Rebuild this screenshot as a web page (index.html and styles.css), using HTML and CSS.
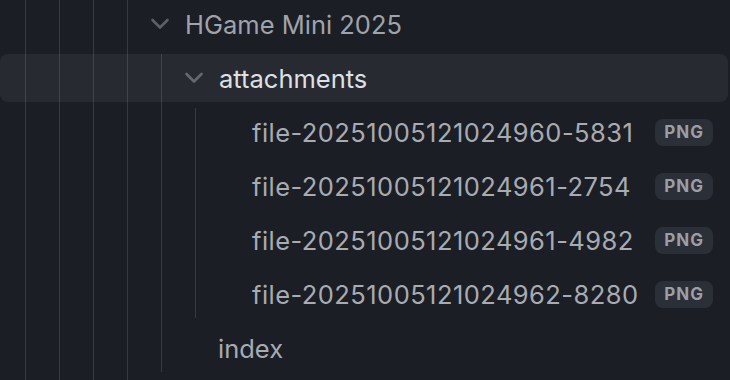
FILE: index.html
```html
<!DOCTYPE html>
<html>
<head>
<meta charset="utf-8">
<link rel="stylesheet" href="styles.css">
</head>
<body>
<div class="tree">
  <div class="children ancestor">
    <div class="children ancestor">
      <div class="children ancestor">
        <div class="children ancestor">
          <div class="row folder">
            <span class="chev"><svg width="20" height="12" viewBox="0 0 20 12"><path d="M2.5 2 L10 9.5 L17.5 2" fill="none" stroke="currentColor" stroke-width="2.6" stroke-linecap="round" stroke-linejoin="round"/></svg></span>
            <span class="name">HGame Mini 2025</span>
          </div>
          <div class="children">
            <div class="row folder active">
              <span class="chev"><svg width="20" height="12" viewBox="0 0 20 12"><path d="M2.5 2 L10 9.5 L17.5 2" fill="none" stroke="currentColor" stroke-width="2.6" stroke-linecap="round" stroke-linejoin="round"/></svg></span>
              <span class="name">attachments</span>
            </div>
            <div class="children">
              <div class="row file"><span class="name num">file-20251005121024960-5831</span><span class="badge">PNG</span></div>
              <div class="row file"><span class="name num">file-20251005121024961-2754</span><span class="badge">PNG</span></div>
              <div class="row file"><span class="name num">file-20251005121024961-4982</span><span class="badge">PNG</span></div>
              <div class="row file"><span class="name num">file-20251005121024962-8280</span><span class="badge">PNG</span></div>
            </div>
            <div class="row file"><span class="name">index</span></div>
          </div>
        </div>
      </div>
    </div>
  </div>
</div>
</body>
</html>
```

FILE: styles.css
```css
html, body {
  margin: 0;
  padding: 0;
  background: #1b1e25;
  height: 100%;
  overflow: hidden;
}

body {
  font-family: Inter, "Noto Sans", sans-serif;
  font-size: 25.5px;
  color: #a8abb1;
}

.tree {
  padding-right: 2px;
}

.children {
  display: flex;
  flex-direction: column;
  gap: 6px;
  margin-left: 25px;
  padding-left: 8px;
  border-left: 1px solid #363a42;
}

.ancestor {
  min-height: 100vh;
}

.row {
  position: relative;
  display: flex;
  align-items: center;
  height: 48px;
  padding-right: 15px;
  box-sizing: border-box;
  white-space: nowrap;
}

.row.folder {
  padding-left: 14px;
}

.row.file {
  padding-left: 48px;
}

.row.active::before {
  content: "";
  position: absolute;
  top: 0;
  bottom: 0;
  left: -170px;
  right: 0;
  border-radius: 8px;
  background: rgba(255, 255, 255, 0.055);
}

.chev {
  display: flex;
  align-items: center;
  justify-content: center;
  width: 20px;
  height: 20px;
  margin-right: 15px;
  color: #5c6069;
}

.name {
  position: relative;
}

.name.num {
  letter-spacing: 0.45px;
}

.folder .name {
  color: #9fa3aa;
}

.folder.active .name {
  color: #dfe0e3;
}

.badge {
  margin-left: auto;
  height: 27px;
  padding: 0 9px;
  border-radius: 8px;
  background: #2b2f37;
  color: #9a9ea6;
  font-size: 17px;
  font-weight: 700;
  letter-spacing: 1px;
  line-height: 27px;
}
```
